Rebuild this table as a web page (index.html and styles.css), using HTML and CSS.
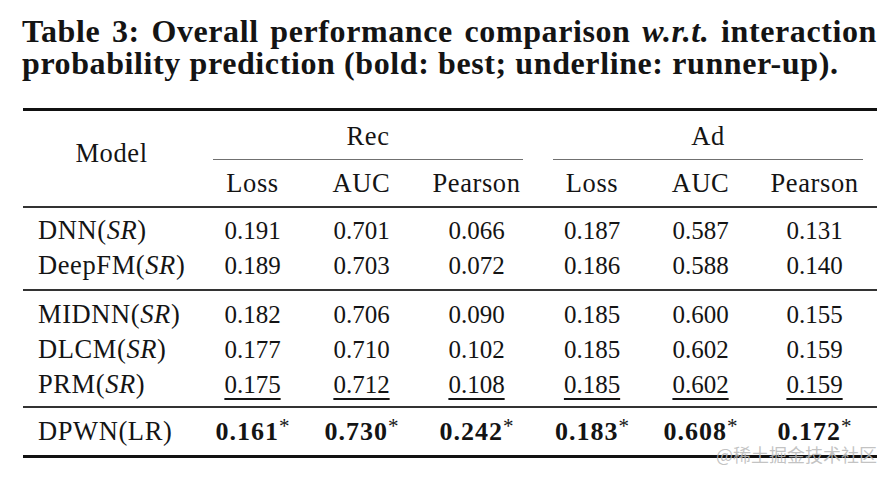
FILE: index.html
```html
<!DOCTYPE html>
<html lang="en">
<head>
<meta charset="utf-8">
<title>Table 3</title>
<link rel="stylesheet" href="styles.css">
</head>
<body>
<div class="page">
  <p class="caption"><span class="line line1">Table 3: Overall performance comparison <i>w.r.t.</i> interaction</span><span class="line">probability prediction (bold: best; underline: runner-up).</span></p>
  <table class="results">
    <colgroup>
      <col class="c-model">
      <col class="c-rloss">
      <col class="c-rauc">
      <col class="c-rpear">
      <col class="c-aloss">
      <col class="c-aauc">
      <col class="c-apear">
    </colgroup>
    <thead>
      <tr class="h1">
        <th rowspan="2" class="model-head lbl">Model</th>
        <th colspan="3" class="grp"><div class="cmid rec lbl">Rec</div></th>
        <th colspan="3" class="grp"><div class="cmid ad lbl">Ad</div></th>
      </tr>
      <tr class="h2">
        <th class="lbl">Loss</th>
        <th class="lbl">AUC</th>
        <th class="lbl">Pearson</th>
        <th class="lbl">Loss</th>
        <th class="lbl">AUC</th>
        <th class="lbl">Pearson</th>
      </tr>
    </thead>
    <tbody class="g1">
      <tr class="first">
        <td class="name lbl">DNN(<i>SR</i>)</td>
        <td>0.191</td><td>0.701</td><td>0.066</td><td>0.187</td><td>0.587</td><td>0.131</td>
      </tr>
      <tr class="last">
        <td class="name lbl">DeepFM(<i>SR</i>)</td>
        <td>0.189</td><td>0.703</td><td>0.072</td><td>0.186</td><td>0.588</td><td>0.140</td>
      </tr>
    </tbody>
    <tbody class="g2">
      <tr class="first">
        <td class="name lbl">MIDNN(<i>SR</i>)</td>
        <td>0.182</td><td>0.706</td><td>0.090</td><td>0.185</td><td>0.600</td><td>0.155</td>
      </tr>
      <tr>
        <td class="name lbl">DLCM(<i>SR</i>)</td>
        <td>0.177</td><td>0.710</td><td>0.102</td><td>0.185</td><td>0.602</td><td>0.159</td>
      </tr>
      <tr class="last">
        <td class="name lbl">PRM(<i>SR</i>)</td>
        <td><span class="ru">0.175</span></td><td><span class="ru">0.712</span></td><td><span class="ru">0.108</span></td><td><span class="ru">0.185</span></td><td><span class="ru">0.602</span></td><td><span class="ru">0.159</span></td>
      </tr>
    </tbody>
    <tbody class="g3">
      <tr class="first last">
        <td class="name lbl">DPWN(LR)</td>
        <td><b class="best">0.161<sup>*</sup></b></td>
        <td><b class="best">0.730<sup>*</sup></b></td>
        <td><b class="best">0.242<sup>*</sup></b></td>
        <td><b class="best">0.183<sup>*</sup></b></td>
        <td><b class="best">0.608<sup>*</sup></b></td>
        <td><b class="best">0.172<sup>*</sup></b></td>
      </tr>
    </tbody>
  </table>
  <div class="watermark">@稀土掘金技术社区</div>
</div>
</body>
</html>
```
FILE: styles.css
```css
html, body {
  margin: 0;
  padding: 0;
  background: #ffffff;
}

body {
  color: #141414;
  font-family: "Liberation Serif", "Times New Roman", serif;
}

.page {
  position: relative;
  width: 893px;
  height: 479px;
  padding: 15px 0 0 22px;
  box-sizing: border-box;
}

.caption {
  margin: 0;
  width: 855px;
  font-size: 32px;
  line-height: 32px;
  font-weight: 700;
  letter-spacing: 0.6px;
}

.caption .line {
  display: block;
}

.caption .line1 {
  text-align: justify;
  text-align-last: justify;
}

.results {
  margin: 29px 0 0 1px;
  width: 854px;
  table-layout: fixed;
  border-collapse: separate;
  border-spacing: 0;
  font-size: 25px;
  line-height: 35px;
}

.c-model { width: 177px; }
.c-rloss { width: 105px; }
.c-rauc { width: 113px; }
.c-rpear { width: 117px; }
.c-aloss { width: 114px; }
.c-aauc { width: 103px; }
.c-apear { width: 125px; }

.results th,
.results td {
  padding: 0;
  font-weight: 400;
  text-align: center;
  white-space: nowrap;
}

.lbl {
  font-size: 26.5px;
  letter-spacing: 0.6px;
}

.h1 th {
  border-top: 3px solid #111;
  padding-top: 8px;
  vertical-align: top;
}

.h1 .model-head {
  padding-top: 25px;
  border-bottom: 2px solid #333;
}

.cmid {
  padding-bottom: 5px;
  border-bottom: 1px solid #707070;
}

.rec {
  margin: 0 12px 0 13px;
}

.ad {
  margin: 0 14px 0 18px;
}

.h2 th {
  padding: 6px 0 5px;
  border-bottom: 2px solid #333;
}

.results td.name {
  text-align: left;
  padding-left: 15px;
}

.g1 .first td { padding-top: 5px; }
.g1 .last td { padding-bottom: 6px; border-bottom: 2px solid #333; }

.g2 .first td { padding-top: 6px; }
.g2 .last td { padding-bottom: 4px; border-bottom: 2px solid #333; }

.g3 .first td { padding-top: 6px; }
.g3 .last td { padding-bottom: 6px; border-bottom: 3px solid #111; }

.ru {
  text-decoration: underline;
  text-underline-offset: 5px;
  text-decoration-thickness: 1.5px;
}

.best {
  font-weight: 700;
  font-size: 26px;
  letter-spacing: 1px;
}

.best sup {
  font-weight: 400;
  font-size: 21px;
  line-height: 0;
  letter-spacing: 0;
  vertical-align: 7px;
}

.watermark {
  position: absolute;
  right: 16px;
  top: 445px;
  font-family: "Noto Sans CJK SC", "Noto Sans", sans-serif;
  font-size: 18px;
  line-height: 18px;
  color: rgba(185, 185, 185, 0.85);
}
```
